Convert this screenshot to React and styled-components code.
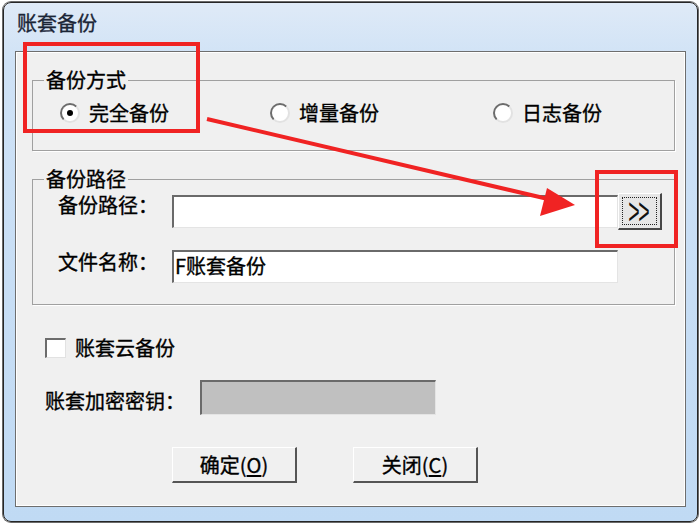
import React from 'react'
import styled, { createGlobalStyle } from 'styled-components'

const GlobalStyle = createGlobalStyle`
  html, body {
    margin: 0;
    padding: 0;
    background: #fff;
  }
  body {
    font-family: "Noto Sans CJK SC", "Noto Sans", sans-serif;
    color: #000;
    -webkit-text-stroke: 0.35px currentColor;
  }
`

// Window chrome
const Stage = styled.div`
  position: relative;
  width: 700px;
  height: 524px;
  overflow: hidden;
`

const Window = styled.div`
  box-sizing: border-box;
  width: 695px;
  height: 520px;
  margin: 2px 0 0 3px;
  padding: 0 11px 14px 11px;
  border: 1px solid #262626;
  border-radius: 8px;
  box-shadow: 0 0 0 1px #6a6a6a;
  background: linear-gradient(#dfeaf7, #cfe2f6 60px, #c0daf4);
  display: flex;
  flex-direction: column;
`

const TitleBar = styled.div`
  box-sizing: border-box;
  height: 48px;
  padding: 8px 0 0 2px;
  font-size: 20px;
  line-height: 24px;
  color: #1b2536;
`

const Client = styled.div`
  flex: 1;
  border: 1px solid #6e6e6e;
  background: #f0f0f0;
  box-shadow: inset 1px 1px 0 #fff, inset -1px -1px 0 #fff;
  display: flex;
  flex-direction: column;
`

// Group boxes
const GroupBox = styled.fieldset`
  margin: 16px 10px 0 16px;
  padding: 0;
  min-inline-size: auto;
  border: 1px solid #a0a0a0;
  box-shadow: 1px 1px 0 #fff;
`

const Legend = styled.legend`
  margin-left: 11px;
  padding: 0 2px;
  font-size: 20px;
  line-height: 24px;
`

const RadioRow = styled.div`
  display: grid;
  grid-template-columns: 210px 223px auto;
  padding: 9px 0 25px 27px;
`

const RadioItem = styled.label`
  display: flex;
  align-items: center;
  gap: 9px;
  height: 24px;
  font-size: 20px;
  line-height: 24px;
`

const RadioDot = styled.span`
  box-sizing: border-box;
  width: 20px;
  height: 20px;
  border-radius: 50%;
  border: 2px solid;
  border-color: #6c6c6c #e2e2e2 #e2e2e2 #6c6c6c;
  background: #fff;
  display: flex;
  align-items: center;
  justify-content: center;

  &::after {
    content: '';
    width: 6px;
    height: 6px;
    border-radius: 50%;
    background: ${p => (p.$checked ? '#000' : 'transparent')};
  }
`

const PathGrid = styled.div`
  display: grid;
  grid-template-columns: 114px 446px 44px;
  row-gap: 20px;
  padding: 2px 0 21px 25px;
`

const FieldLabel = styled.span`
  align-self: start;
  font-size: 20px;
  line-height: 24px;
  white-space: nowrap;
`

const TextBox = styled.div`
  box-sizing: border-box;
  align-self: center;
  width: ${p => p.$w}px;
  height: ${p => p.$h}px;
  border-style: solid;
  border-width: 2px 1px 1px 2px;
  border-color: #6a6a6a #e4e4e4 #e4e4e4 #6a6a6a;
  background: ${p => (p.$disabled ? '#c0c0c0' : '#fff')};
  padding-left: 1px;
  font-size: 20px;
  line-height: 28px;
  white-space: nowrap;
`

const BrowseButton = styled.button`
  box-sizing: border-box;
  width: 44px;
  height: 37px;
  padding: 0;
  border-style: solid;
  border-width: 1px 2px 2px 1px;
  border-color: #fff #474747 #474747 #fff;
  background: #e6e6e6;
  display: flex;
  align-items: center;
  justify-content: center;
`

const FocusRing = styled.span`
  box-sizing: border-box;
  width: 35px;
  height: 28px;
  border: 1px dotted #222;
  display: flex;
  align-items: center;
  justify-content: center;
`

const Chevrons = styled.span`
  display: inline-block;
  font-family: "Liberation Sans", sans-serif;
  font-size: 26px;
  line-height: 26px;
  letter-spacing: -2px;
  color: #111;
  -webkit-text-stroke: 0;
  transform: translate(-1px, 0) scale(0.75, 1.4);
`

// Lower part
const CheckRow = styled.label`
  display: flex;
  align-items: center;
  gap: 9px;
  height: 24px;
  margin: 31px 0 0 29px;
  font-size: 20px;
  line-height: 24px;
`

const CheckBox = styled.span`
  box-sizing: border-box;
  width: 21px;
  height: 20px;
  border-style: solid;
  border-width: 2px 1px 1px 2px;
  border-color: #6c6c6c #e2e2e2 #e2e2e2 #6c6c6c;
  background: #fff;
`

const KeyRow = styled.div`
  display: flex;
  align-items: center;
  margin: 20px 0 0 29px;
`

const KeyLabel = styled.span`
  width: 155px;
  padding-top: 6px;
  font-size: 20px;
  line-height: 24px;
  white-space: nowrap;
`

const ButtonRow = styled.div`
  display: flex;
  gap: 56px;
  margin-top: 32px;
  padding-left: 156px;
`

const DialogButton = styled.button`
  box-sizing: border-box;
  width: 125px;
  height: 36px;
  padding: 0;
  border-style: solid;
  border-width: 1px 2px 2px 1px;
  border-color: #fff #555 #555 #fff;
  background: #f0f0f0;
  font-family: "Noto Sans CJK SC", sans-serif;
  font-size: 20px;
  line-height: 24px;
  color: #000;
  -webkit-text-stroke: 0.35px currentColor;

  u {
    text-underline-offset: 2px;
  }
`

// Red annotations drawn on top of the screenshot
const Overlay = styled.svg`
  position: absolute;
  left: 0;
  top: 0;
  pointer-events: none;
`

const App = () => (
  <>
    <GlobalStyle />
    <Stage>
      <Window>
        <TitleBar>账套备份</TitleBar>
        <Client>
          <GroupBox>
            <Legend>备份方式</Legend>
            <RadioRow>
              <RadioItem>
                <RadioDot $checked />
                完全备份
              </RadioItem>
              <RadioItem>
                <RadioDot />
                增量备份
              </RadioItem>
              <RadioItem>
                <RadioDot />
                日志备份
              </RadioItem>
            </RadioRow>
          </GroupBox>

          <GroupBox>
            <Legend>备份路径</Legend>
            <PathGrid>
              <FieldLabel>备份路径：</FieldLabel>
              <TextBox $w={446} $h={33} />
              <BrowseButton>
                <FocusRing>
                  <Chevrons>&gt;&gt;</Chevrons>
                </FocusRing>
              </BrowseButton>
              <FieldLabel>文件名称：</FieldLabel>
              <TextBox $w={446} $h={33}>
                F账套备份
              </TextBox>
            </PathGrid>
          </GroupBox>

          <CheckRow>
            <CheckBox />
            账套云备份
          </CheckRow>

          <KeyRow>
            <KeyLabel>账套加密密钥：</KeyLabel>
            <TextBox $w={236} $h={35} $disabled />
          </KeyRow>

          <ButtonRow>
            <DialogButton>
              确定(<u>O</u>)
            </DialogButton>
            <DialogButton>
              关闭(<u>C</u>)
            </DialogButton>
          </ButtonRow>
        </Client>
      </Window>

      <Overlay width="700" height="524" viewBox="0 0 700 524">
        <rect x="25" y="44" width="173" height="87" fill="none" stroke="#f02323" strokeWidth="4" />
        <rect x="597" y="172" width="79" height="74" fill="none" stroke="#f02323" strokeWidth="4" />
        <line x1="207" y1="119" x2="548" y2="199" stroke="#f02323" strokeWidth="4" />
        <polygon points="547,188 575,205 540,216" fill="#f02323" />
      </Overlay>
    </Stage>
  </>
)

export default App
